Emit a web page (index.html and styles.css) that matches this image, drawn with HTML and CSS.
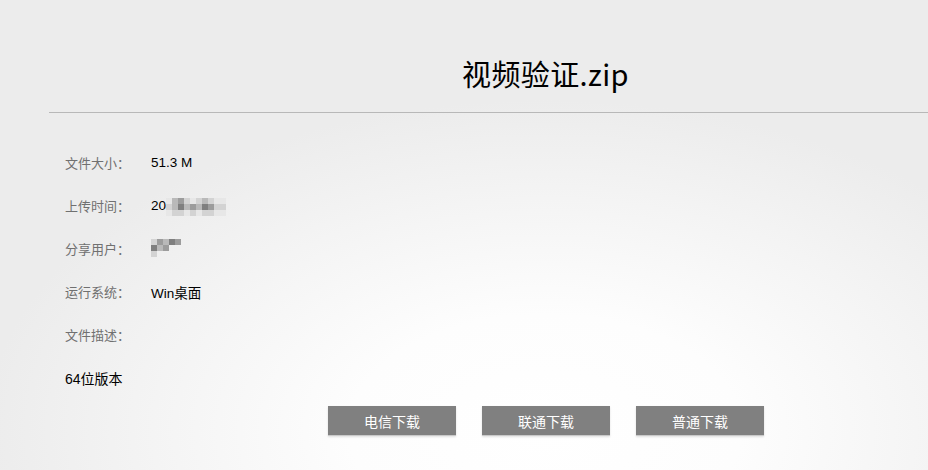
FILE: index.html
```html
<!DOCTYPE html>
<html lang="zh-CN">
<head>
<meta charset="utf-8">
<title>视频验证.zip</title>
<link rel="stylesheet" href="styles.css">
</head>
<body>
<div class="page">
  <header class="head">
    <h1 class="title">视频验证.zip</h1>
  </header>
  <div class="info">
    <div class="row"><span class="label">文件大小：</span><span class="value">51.3 M</span></div>
    <div class="row"><span class="label">上传时间：</span><span class="value">20<span class="mosaic m-time">
      <i class="p0"></i><i class="p2"></i><i class="p3"></i><i class="p1"></i><i class="p0"></i><i class="p1"></i><i class="p2"></i><i class="p1"></i><i class="p0"></i><i class="p0"></i>
      <i class="p1"></i><i class="p2"></i><i class="p4"></i><i class="p2"></i><i class="p3"></i><i class="p2"></i><i class="p4"></i><i class="p3"></i><i class="p1"></i><i class="p1"></i>
      <i class="p0"></i><i class="p1"></i><i class="p1"></i><i class="p0"></i><i class="p1"></i><i class="p0"></i><i class="p1"></i><i class="p1"></i><i class="p0"></i><i class="p0"></i>
    </span></span></div>
    <div class="row"><span class="label">分享用户：</span><span class="value"><span class="mosaic m-user">
      <i class="p1"></i><i class="p3"></i><i class="p2"></i><i class="p4"></i><i class="p3"></i>
      <i class="p4"></i><i class="p2"></i><i class="p3"></i><i class="n"></i><i class="n"></i>
      <i class="p1"></i><i class="n"></i><i class="n"></i><i class="n"></i><i class="n"></i>
    </span></span></div>
    <div class="row"><span class="label">运行系统：</span><span class="value">Win桌面</span></div>
    <div class="row"><span class="label">文件描述：</span><span class="value"></span></div>
    <div class="row"><span class="desc">64位版本</span></div>
  </div>
  <div class="actions">
    <a class="btn" href="#">电信下载</a>
    <a class="btn" href="#">联通下载</a>
    <a class="btn" href="#">普通下载</a>
  </div>
</div>
</body>
</html>
```

FILE: styles.css
```css
html, body {
  margin: 0;
  height: 100%;
}
body {
  overflow: hidden;
  font-family: "Liberation Sans", "Noto Sans CJK SC", sans-serif;
  background: radial-gradient(ellipse 560px 330px at 545px 430px, #ffffff 0%, #fdfdfd 35%, #f4f4f4 70%, #ececec 100%) #ececec;
  color: #000;
}
.page {
  padding-left: 49px;
}
.head {
  height: 112px;
  border-bottom: 1px solid #b8b8b8;
  display: flex;
  align-items: flex-start;
}
.title {
  margin: 53px 0 0 413px;
  font-family: "Noto Sans CJK SC", "Liberation Sans", sans-serif;
  font-weight: normal;
  font-size: 29px;
  line-height: 40px;
  letter-spacing: 0.4px;
}
.info {
  padding: 28px 0 0 16px;
  display: flex;
  flex-direction: column;
}
.row {
  display: flex;
  align-items: center;
  height: 43px;
  font-size: 13px;
}
.label {
  width: 86px;
  color: #707070;
  font-family: "Noto Sans CJK SC", sans-serif;
}
.value {
  display: flex;
  align-items: center;
  color: #000;
  font-size: 13.5px;
}
.desc {
  color: #000;
  font-size: 14px;
}
.mosaic {
  display: grid;
  grid-auto-rows: 6px;
  opacity: 0.85;
  filter: blur(0.4px);
}
.m-time {
  grid-template-columns: repeat(10, 6px);
  margin-top: 2px;
}
.m-user {
  grid-template-columns: repeat(5, 6px);
  margin-top: -2px;
}
.mosaic i { display: block; }
.p0 { background: #e6e6e6; }
.p1 { background: #cfcfcf; }
.p2 { background: #b0b0b0; }
.p3 { background: #8e8e8e; }
.p4 { background: #6c6c6c; }
.n { background: transparent; }
.actions {
  display: flex;
  gap: 26px;
  padding: 7px 0 0 279px;
}
.btn {
  display: flex;
  align-items: center;
  justify-content: center;
  width: 128px;
  height: 29px;
  background: #808080;
  color: #fff;
  text-decoration: none;
  font-family: "Noto Sans CJK SC", sans-serif;
  font-size: 14px;
  border-bottom: 1px solid #c9c9c9;
  box-shadow: 0 1px 2px rgba(0,0,0,0.12);
}
```
